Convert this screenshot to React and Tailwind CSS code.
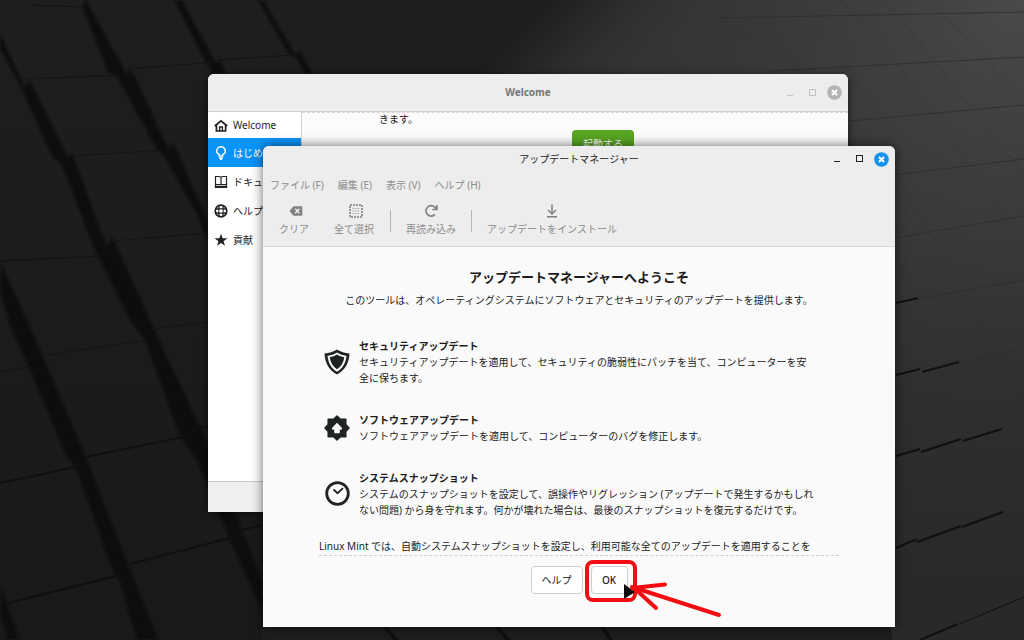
import React from "react";

const welcomeItems = [
  { id: "welcome", label: "Welcome", icon: HomeIcon },
  { id: "start", label: "はじめ", icon: BulbIcon, selected: true },
  { id: "docs", label: "ドキュ", icon: BookIcon },
  { id: "help", label: "ヘルプ", icon: BuoyIcon },
  { id: "contribute", label: "貢献", icon: StarIcon },
];

const menus = ["ファイル (F)", "編集 (E)", "表示 (V)", "ヘルプ (H)"];

const sections = [
  {
    title: "セキュリティアップデート",
    icon: ShieldIcon,
    lines: [
      "セキュリティアップデートを適用して、セキュリティの脆弱性にパッチを当て、コンピューターを安",
      "全に保ちます。",
    ],
  },
  {
    title: "ソフトウェアアップデート",
    icon: BadgeIcon,
    lines: ["ソフトウェアアップデートを適用して、コンピューターのバグを修正します。"],
  },
  {
    title: "システムスナップショット",
    icon: ClockIcon,
    lines: [
      "システムのスナップショットを設定して、誤操作やリグレッション (アップデートで発生するかもしれ",
      "ない問題) から身を守れます。何かが壊れた場合は、最後のスナップショットを復元するだけです。",
    ],
  },
];

function HomeIcon() {
  return (
    <svg viewBox="0 0 14 14" className="size-[14px]" fill="none" stroke="currentColor" strokeWidth="1.7">
      <path d="M0.800 7 7 1.800l6.200 5.200M2.400 6v6h9.200V6" />
      <path d="M5.600 12V8h2.800v4" strokeWidth="1.4" />
    </svg>
  );
}

function BulbIcon() {
  return (
    <svg viewBox="0 0 14 14" className="size-[14px]" fill="none" stroke="currentColor" strokeWidth="1.5">
      <path d="M5.3 10V8.6C3.6 7.9 2.7 6.6 2.7 5a4.3 4.3 0 0 1 8.6 0c0 1.6-.9 2.9-2.6 3.6V10z" />
      <path d="M5 12h4M6 13.3h2" />
    </svg>
  );
}

function BookIcon() {
  return (
    <svg viewBox="0 0 14 14" className="size-[14px]" fill="none" stroke="currentColor" strokeWidth="1.2">
      <path d="M1.500 11.500V1.500h3.800L7 2.300l1.700-.8h3.800V11.500M7 2.300V9.500M1.500 9.600h11" />
      <path d="M0.800 12h12.400" strokeWidth="1.800" />
    </svg>
  );
}

function BuoyIcon() {
  return (
    <svg viewBox="0 0 14 14" className="size-[14px]" fill="none" stroke="currentColor">
      <circle cx="7" cy="7" r="5.8" strokeWidth="1.700" />
      <path d="M5 1.500v11M9 1.500v11M1.500 5h11M1.500 9h11" strokeWidth="1.300" />
      <circle cx="7" cy="7" r="1.800" fill="#fff" stroke="none" />
    </svg>
  );
}

function StarIcon() {
  return (
    <svg viewBox="0 0 14 14" className="size-[14px]" fill="currentColor">
      <path d="M7 .7 8.600 5.200l4.800.1-3.800 2.900 1.400 4.600L7 10.100l-4 2.700 1.400-4.600L.6 5.300l4.800-.1z" />
    </svg>
  );
}

function ShieldIcon() {
  return (
    <svg viewBox="0 0 26 26" className="size-[26px]">
      <path d="M13 .6c3.700 2.400 7.800 3.700 12.500 4C25 14 21 21.500 13 25.500 5 21.500 1 14 .5 4.600 5.200 4.300 9.300 3 13 .6z" fill="#202323" />
      <path d="M13 3.600c2.900 1.800 6 2.900 9.500 3.300C21.700 14 18.600 19.400 13 22.700 7.400 19.400 4.300 14 3.500 6.900 7 6.500 10.100 5.400 13 3.600z" fill="#fafafa" />
      <path d="M13 5.600c2.300 1.400 4.600 2.200 7.300 2.700-.8 5.200-3.100 9.200-7.300 12-4.200-2.800-6.500-6.800-7.300-12C8.400 7.800 10.700 7 13 5.600z" fill="#202323" />
    </svg>
  );
}

function BadgeIcon() {
  return (
    <svg viewBox="0 0 26 26" className="size-[26px]">
      <path
        d="M13 1l3.400 3.200h5.400v5.400L25 13l-3.200 3.400v5.400h-5.400L13 25l-3.400-3.200H4.200v-5.400L1 13l3.200-3.400V4.200h5.400z"
        fill="#202323"
        stroke="#202323"
        strokeWidth="1.500"
        strokeLinejoin="round"
      />
      <path d="M13 7.800l5 5.200c.4 1-.3 1.700-1.200 1.700h-1v2.500c0 .6-.4 1-1 1h-3.600c-.6 0-1-.4-1-1v-2.500h-1C8.300 14.700 7.600 14 8 13z" fill="#fafafa" />
    </svg>
  );
}

function ClockIcon() {
  return (
    <svg viewBox="0 0 26 26" className="size-[26px]" fill="none" stroke="#202323">
      <circle cx="13.500" cy="12.500" r="10.800" strokeWidth="2.800" />
      <path d="M9.500 8.500l4 3.700 5.500-5" strokeWidth="1.800" />
    </svg>
  );
}

function ClearIcon() {
  return (
    <svg viewBox="0 0 14 14" className="size-[14px] translate-x-0.5">
      <path d="M.5 7 4.500 2.200H12.300a1 1 0 0 1 1 1v7.600a1 1 0 0 1-1 1H4.500z" fill="#808080" />
      <path d="M6.200 4.800l4.200 4.400M10.400 4.800L6.200 9.200" stroke="#eee" strokeWidth="1.500" />
    </svg>
  );
}

function SelectAllIcon() {
  return (
    <svg viewBox="0 0 14 14" className="size-[14px] translate-x-0.5" fill="none" stroke="#808080">
      <rect x="1" y="1" width="12" height="12" strokeWidth="1.600" strokeDasharray="2 1" />
      <path d="M3.500 4.500h7M3.500 7h7M3.500 9.500h7" strokeDasharray="1.500 1" stroke="#a8a8a8" />
    </svg>
  );
}

function ReloadIcon() {
  return (
    <svg viewBox="0 0 14 14" className="size-[14px]" fill="none" stroke="#808080" strokeWidth="1.700">
      <path d="M11 10.400A5.200 5.200 0 1 1 10.900 3.300L12.400 5" />
      <path d="M12.800 1v4.500H8.300" />
    </svg>
  );
}

function InstallIcon() {
  return (
    <svg viewBox="0 0 14 14" className="size-[14px]" fill="none" stroke="#808080" strokeWidth="1.500">
      <path d="M7 .5v9M3 6l4 4 4-4M2 12.800h10" />
    </svg>
  );
}

function Wallpaper() {
  return (
    <svg
      aria-hidden="true"
      viewBox="0 0 1024 640"
      preserveAspectRatio="xMidYMid slice"
      className="absolute inset-0 size-full"
    >
      <defs>
        <linearGradient id="base" x1="0" y1="0" x2="0" y2="1">
          <stop offset="0" stopColor="#1e1e1e" />
          <stop offset="1" stopColor="#191919" />
        </linearGradient>
        <linearGradient id="sheen" gradientUnits="userSpaceOnUse" x1="530" y1="20" x2="610" y2="100">
          <stop offset="0" stopColor="#303030" stopOpacity="0" />
          <stop offset="0.6" stopColor="#2f2f2f" />
          <stop offset="1" stopColor="#343434" />
        </linearGradient>
        <radialGradient id="glow" gradientUnits="userSpaceOnUse" cx="1024" cy="0" r="420">
          <stop offset="0" stopColor="#4a4a4a" />
          <stop offset="0.5" stopColor="#404040" stopOpacity="0.6" />
          <stop offset="1" stopColor="#363636" stopOpacity="0" />
        </radialGradient>
        <linearGradient id="low" x1="0" y1="0" x2="0" y2="1">
          <stop offset="0.35" stopColor="#292929" stopOpacity="0" />
          <stop offset="0.9" stopColor="#292929" />
        </linearGradient>
        <filter id="soft" x="-5%" y="-5%" width="110%" height="110%">
          <feGaussianBlur stdDeviation="0.8" />
        </filter>
      </defs>
      <rect width="1024" height="640" fill="url(#base)" />
      <path d="M440 0H1024V640H620L440 110z" fill="url(#sheen)" />
      <rect x="860" width="164" height="640" fill="url(#low)" />
      <rect x="600" width="424" height="640" fill="url(#glow)" />
      <rect x="262" y="600" width="630" height="40" fill="#1e1e1e" />
      <g fill="#0e0e0e" filter="url(#soft)">
        <path d="M0 33L25 88 29 80 68 157 72 153 107 248 112 236 150 320 166 356 180 384 205 437 238 520 245 538 263 585V612L230 540 197 460 180 436 145 340 130 320 97 255 62 165 53 158 22 89 0 48z" />
        <path d="M82 5L86 0 127 75 131 69 169 150 173 142 208 222V240L196 212 165 158 157 150 117 76 108 72z" />
        <path d="M174 0H182L215 62 219 60 226 74H214L207 64z" />
        <path d="M258 0H263L295 54 300 52 313 74H306L296 57 289 55z" />
        <path d="M0 262L27 320 85 455 130 570 158 640H137L120 582 112 568 76 468 66 455 30 370 10 325 0 290z" />
        <path d="M0 585L20 640H8L0 612z" />
      </g>
      <g fill="none" stroke="#101010" strokeWidth="2">
        <path d="M0 483L80 466M86 457L193 435M5 604L120 575M130 564L238 536M242 530L262 525M197 428L208 426" />
        <path d="M384 626L398 642M496 626L510 642M602 626L612 642" strokeWidth="4" />
      </g>
      <g fill="none" stroke="#141414" strokeWidth="1">
        <path d="M0 372L28 367M42 356L145 340M155 329L207 322M25 79L122 75M127 69L215 62M28 5L83 7M70 156L165 150M0 261L100 256M112 241L208 233M218 60L292 55" />
      </g>
      <g fill="none" stroke="#2d2d2d" strokeWidth="1">
        <path d="M720 18L1024 12M770 71L1024 57M850 121L1024 105M895 175L1024 159M895 238L1024 216M895 303L1024 280M960 363L1024 347M1000 429L1024 422M1000 512L1024 505" opacity=".8" />
        <path d="M704 0L717 16 800 71M755 0L802 71M795 0L848 65 895 146M840 0L895 60 1024 245M885 0L1024 174M930 0L1024 103M895 170L1024 400" opacity=".35" />
      </g>
      <g fill="none" stroke="#101010" strokeWidth="2">
        <path d="M896 303L918 298M896 375L920 369M922 372L959 362M896 456L920 449M921 452L961 439M963 441L1002 429M896 548L917 539M917 542L961 526M962 527L1003 512M920 640L958 624" />
        <path d="M960 624L1024 597" strokeWidth="1" />
      </g>
    </svg>
  );
}

function WindowButtons({ active }) {
  return (
    <div className={"flex items-center gap-3 " + (active ? "text-[#222]" : "text-[#c4c4c4]")}>
      <button type="button" aria-label="最小化" className="grid size-[10px] place-items-center">
        <svg viewBox="0 0 10 10" className="size-[10px]" stroke="currentColor">
          <path d="M2 7.500h6" />
        </svg>
      </button>
      <button type="button" aria-label="最大化" className="grid size-[10px] place-items-center">
        <svg viewBox="0 0 10 10" className="size-[10px]" stroke="currentColor" fill="none">
          <rect x="2.500" y="1.500" width="6" height="6" />
        </svg>
      </button>
      <button type="button" aria-label="閉じる" className="-ml-0.5 grid size-[15px] place-items-center">
        <svg viewBox="0 0 15 15" className="size-[15px]">
          <circle cx="7.500" cy="7.500" r="7.300" fill={active ? "#1593ec" : "#b4b4b4"} />
          <path d="M5 5l5 5M10 5l-5 5" stroke="#fff" strokeWidth="2" />
        </svg>
      </button>
    </div>
  );
}

function WelcomeWindow() {
  return (
    <section
      aria-label="Welcome"
      className="absolute top-[74px] right-[176px] bottom-[128px] left-[208px] flex flex-col overflow-hidden rounded-t-md bg-[#fbfbfb] shadow-[0_2px_10px_rgba(0,0,0,0.6)]"
    >
      <header className="grid h-[38px] shrink-0 grid-cols-[1fr_auto_1fr] items-center border-b border-[#cfcfcf] bg-[#ededed] px-1.5">
        <span />
        <h2 className="text-[10px] font-bold text-[#777]">Welcome</h2>
        <div className="justify-self-end">
          <WindowButtons />
        </div>
      </header>
      <div className="flex min-h-0 flex-1">
        <nav className="w-[94px] shrink-0 border-r border-[#d4d4d4] bg-white text-[#222]">
          <ul>
            {welcomeItems.map(({ id, label, icon: Icon, selected }) => (
              <li key={id}>
                <a
                  href={"#" + id}
                  className={
                    "flex items-center gap-[5px] pt-px pl-1.5 text-[10px] whitespace-nowrap " +
                    (id === "welcome" ? "h-[26px] " : "h-[29px] ") +
                    (selected ? "bg-[#0a94f8] text-white" : "")
                  }
                >
                  <Icon />
                  {label}
                </a>
              </li>
            ))}
          </ul>
        </nav>
        <div className="flex-1 border-t border-dashed border-[#d6d6d6]">
          <p className="pl-[77px] text-[10px] leading-3 text-[#222]">きます。</p>
          <button
            type="button"
            className="mx-auto mt-[5px] block h-7 w-[62px] translate-x-7 rounded-sm bg-[#58a522] text-[10px] text-white"
          >
            起動する
          </button>
        </div>
      </div>
      <footer className="h-[31px] shrink-0 border-t border-[#c8c8c8] bg-[#f0f0f0]" />
    </section>
  );
}

function ToolButton({ label, icon: Icon, width }) {
  return (
    <button type="button" className={"flex flex-col items-center gap-[3px] " + width}>
      <Icon />
      <span className="leading-4">{label}</span>
    </button>
  );
}

function Divider() {
  return <span className="mx-1 h-[22px] w-px bg-[#b4b4b4]" />;
}

function Annotation() {
  return (
    <svg aria-hidden="true" viewBox="0 0 144 64" className="pointer-events-none absolute -top-2 -left-2 h-16 w-36">
      <rect x="4" y="4" width="48" height="38" rx="6" fill="none" stroke="#f20d12" strokeWidth="4" />
      <path d="M41 26v15l11-7z" fill="#0a0a0a" />
      <g fill="none" stroke="#f20d12" strokeWidth="4" strokeLinecap="round">
        <path d="M49 29L136 57M49 30L82 26.500M50 29L73 50" />
      </g>
    </svg>
  );
}

function UpdateManager() {
  return (
    <main className="absolute top-[146px] right-[129px] bottom-[13px] left-[263px] flex flex-col rounded-t-md bg-[#fafafa] text-[10px] text-[#222] shadow-[0_0_12px_rgba(0,0,0,0.6)]">
      <header className="h-[101px] shrink-0 rounded-t-md border-b border-[#d8d8d8] bg-[#ededed]">
        <div className="grid h-[26px] grid-cols-[1fr_auto_1fr] items-center px-1.5">
          <span />
          <h2>アップデートマネージャー</h2>
          <div className="justify-self-end">
            <WindowButtons active />
          </div>
        </div>
        <nav className="flex h-[26px] items-center gap-[14px] px-[7px] text-[#8c8c8c]">
          {menus.map((menu) => (
            <button key={menu} type="button">
              {menu}
            </button>
          ))}
        </nav>
        <div className="flex items-center px-[3px] pt-[6px] text-[#8c8c8c]">
          <ToolButton label="クリア" icon={ClearIcon} width="w-14" />
          <ToolButton label="全て選択" icon={SelectAllIcon} width="w-16" />
          <Divider />
          <ToolButton label="再読み込み" icon={ReloadIcon} width="w-[72px]" />
          <Divider />
          <ToolButton label="アップデートをインストール" icon={InstallIcon} width="w-[152px]" />
        </div>
      </header>

      <div className="mx-14 border-b border-dashed border-[#cfcfcf] pt-5 pb-px">
        <h1 className="text-center text-[13px] leading-5 font-bold text-[#1c1c1c]">
          アップデートマネージャーへようこそ
        </h1>
        <p className="mt-[5px] text-center leading-4">
          このツールは、オペレーティングシステムにソフトウェアとセキュリティのアップデートを提供します。
        </p>
        <div className="mt-[30px] flex flex-col gap-[26px]">
          {sections.map(({ title, icon: Icon, lines }) => (
            <section key={title} className="flex items-center gap-[9px] pl-[5px] leading-4">
              <Icon />
              <div>
                <h3 className="font-bold text-[#1c1c1c]">{title}</h3>
                <p>
                  {lines.map((line) => (
                    <span key={line} className="block whitespace-nowrap">
                      {line}
                    </span>
                  ))}
                </p>
              </div>
            </section>
          ))}
        </div>
        <p className="mt-5 leading-4 whitespace-nowrap">
          Linux Mint では、自動システムスナップショットを設定し、利用可能な全てのアップデートを適用することを
        </p>
      </div>

      <div className="mt-[10px] flex justify-center gap-2">
        <button type="button" className="h-7 w-[52px] rounded-sm border border-[#cfcfcf] bg-white">
          ヘルプ
        </button>
        <div className="relative">
          <button type="button" className="h-7 w-[37px] rounded-sm border border-[#cfcfcf] bg-white font-medium">
            OK
          </button>
          <Annotation />
        </div>
      </div>
    </main>
  );
}

export default function App() {
  return (
    <div className="relative min-h-screen overflow-hidden bg-[#1b1b1b] font-['Noto_Sans','Noto_Sans_CJK_JP',sans-serif]">
      <Wallpaper />
      <WelcomeWindow />
      <UpdateManager />
    </div>
  );
}
